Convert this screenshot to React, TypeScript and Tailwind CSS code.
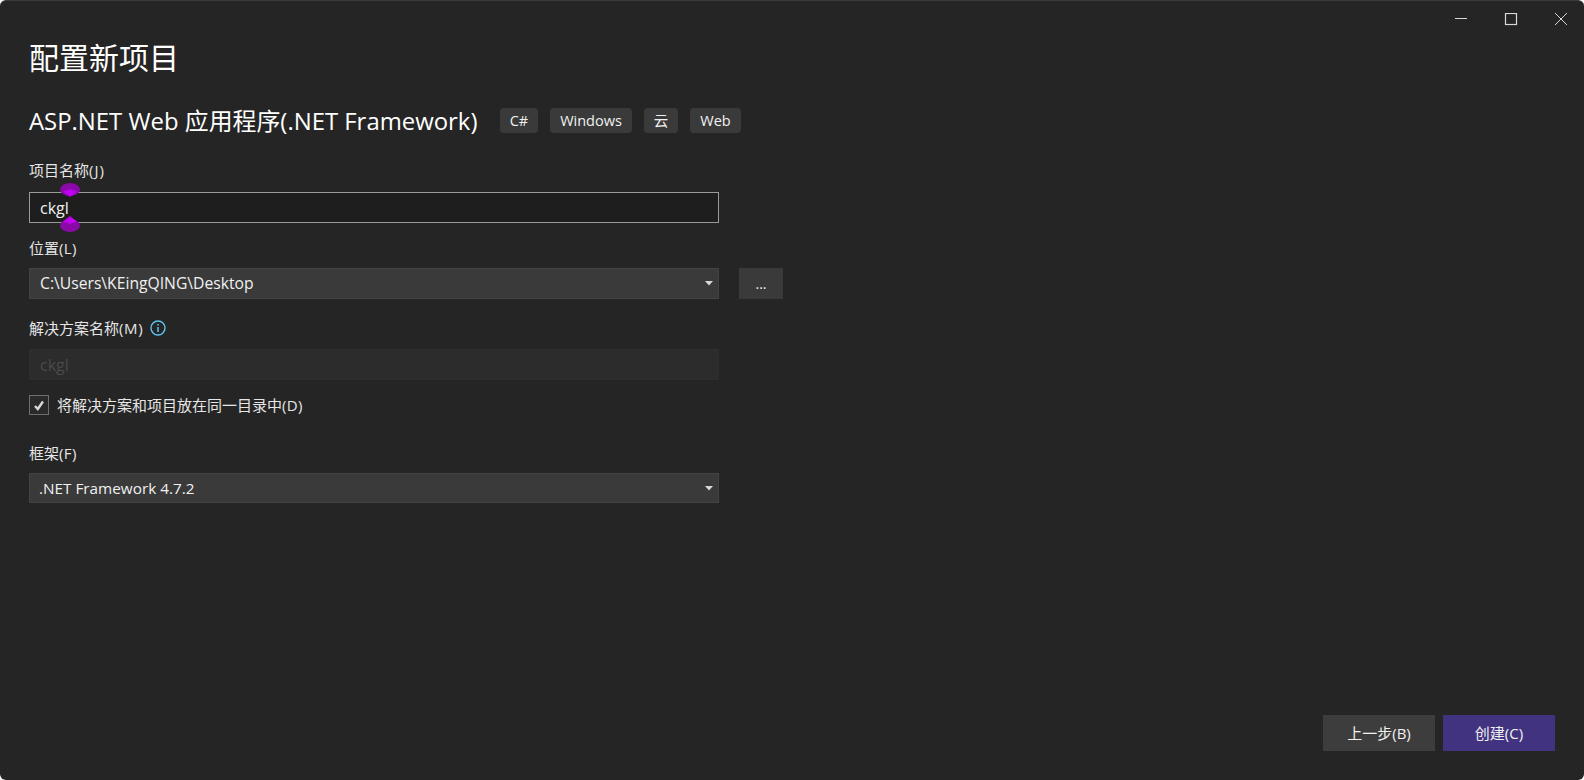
const font = { fontFamily: '"Open Sans", "Noto Sans CJK SC", sans-serif' };

function Caret() {
  return (
    <svg width="8" height="5" viewBox="0 0 8 5" className="shrink-0">
      <path d="M0 0h8L4 4.5z" fill="#d8d8d8" />
    </svg>
  );
}

function Tag({ label, className }: { label: string; className: string }) {
  return (
    <span className={`flex h-[25px] items-center justify-center rounded-[4px] bg-[#3a3a3a] text-[14.5px] text-[#f1f1f1] ${className}`}>
      {label}
    </span>
  );
}

function Select({ value, className }: { value: string; className: string }) {
  return (
    <div className={`flex w-[690px] items-center justify-between border border-[#434343] bg-[#3a3a3a] pr-[5px] text-[#f1f1f1] ${className}`}>
      <span>{value}</span>
      <Caret />
    </div>
  );
}

export default function App() {
  return (
    <div
      style={font}
      className="relative flex h-[780px] w-[1584px] flex-col overflow-hidden rounded-[6px] border-t border-[#3a3a3a] bg-[#252525] text-[#f1f1f1]"
    >
      {/* title bar buttons */}
      <div className="flex h-[25px] items-start justify-end pt-[12px]">
        <svg width="160" height="14" viewBox="0 0 160 14" className="text-[#d8d8d8]">
          <path d="M31 5.5h12" stroke="currentColor" fill="none" />
          <rect x="81.5" y="0.5" width="11" height="11" stroke="currentColor" strokeWidth="1.2" fill="none" />
          <path d="M131 0l12 12M143 0l-12 12" stroke="currentColor" fill="none" />
        </svg>
      </div>

      <div className="flex flex-1 flex-col pl-[29px]">
        <h1 className="mt-[14px] h-[36px] text-[30px] leading-[36px] font-normal text-white">配置新项目</h1>

        <div className="mt-[32px] flex h-[25px] items-center">
          <h2 className="w-[471px] text-[23.9px] leading-[25px] font-normal whitespace-nowrap text-white">
            ASP.NET Web 应用程序(.NET Framework)
          </h2>
          <div className="flex gap-[12px]">
            <Tag label="C#" className="w-[38px]" />
            <Tag label="Windows" className="w-[82px]" />
            <Tag label="云" className="w-[34px]" />
            <Tag label="Web" className="w-[51px]" />
          </div>
        </div>

        <label className="mt-[27px] h-[20px] text-[15px] leading-[20px] text-[#e6e6e6]">
          项目名称<span className="tracking-[1px]">(J)</span>
        </label>
        <div className="relative mt-[12px] flex h-[31px] w-[690px] items-center border border-[#9a9a9a] bg-[#1e1e1e] pl-[10px] text-[16px]">
          ckgl
          {/* selection handles */}
          <span className="absolute top-[-10px] left-[30px] h-[13px] w-[20px] rounded-[50%] bg-[#8a0aa8]" />
          <span className="absolute top-[-4px] left-[33px] h-[8px] w-[14px] bg-[#c000f0] [clip-path:polygon(50%_0,100%_30%,50%_100%,0_30%)]" />
          <span className="absolute bottom-[-10px] left-[30px] h-[13px] w-[20px] rounded-[50%] bg-[#8a0aa8]" />
          <span className="absolute bottom-[-2px] left-[33px] h-[8px] w-[14px] bg-[#c000f0] [clip-path:polygon(50%_0,100%_70%,50%_100%,0_70%)]" />
        </div>

        <label className="mt-[15px] h-[20px] text-[15px] leading-[20px] text-[#e6e6e6]">
          位置<span className="tracking-[0.4px]">(L)</span>
        </label>
        <div className="mt-[10px] flex items-center gap-[20px]">
          <Select value="C:\Users\KEingQING\Desktop" className="h-[31px] pl-[10px] text-[15.7px]" />
          <button className="flex h-[31px] w-[44px] items-center justify-center bg-[#3a3a3a] text-[14px] text-[#f1f1f1]">...</button>
        </div>

        <div className="mt-[19px] flex h-[20px] items-center gap-[7px] text-[15px] text-[#e6e6e6]">
          <span>
            解决方案名称<span className="tracking-[0.6px]">(M)</span>
          </span>
          <svg width="16" height="16" viewBox="0 0 16 16">
            <circle cx="8" cy="8" r="7" stroke="#5cc4f0" strokeWidth="1.4" fill="none" />
            <path d="M8 7v5M8 4v1.6" stroke="#5cc4f0" strokeWidth="1.5" fill="none" />
          </svg>
        </div>
        <div className="mt-[11px] flex h-[31px] w-[690px] items-center border border-[#2e2e2e] bg-[#2c2c2c] pl-[10px] text-[16px] text-[#4a4a4a]">ckgl</div>

        <div className="mt-[15px] flex h-[20px] items-center gap-[8px] text-[15px] text-[#e6e6e6]">
          <span className="flex h-[20px] w-[20px] items-center justify-center border border-[#6e6e6e] bg-[#2a2a2a]">
            <svg width="12" height="11" viewBox="0 0 12 11">
              <path d="M2 6l2.8 3L10 1.5" stroke="#d8d8d8" strokeWidth="2.4" fill="none" />
            </svg>
          </span>
          <span>
            将解决方案和项目放在同一目录中<span className="tracking-[0.4px]">(D)</span>
          </span>
        </div>

        <label className="mt-[28px] h-[20px] text-[15px] leading-[20px] text-[#e6e6e6]">
          框架<span className="tracking-[0.4px]">(F)</span>
        </label>
        <Select value=".NET Framework 4.7.2" className="mt-[10px] h-[30px] pl-[9px] text-[15.3px]" />

        <div className="mt-auto mb-[29px] flex justify-end gap-[8px] pr-[29px]">
          <button className="h-[36px] w-[112px] bg-[#3d3d3d] text-[15px] text-[#f1f1f1]">上一步(B)</button>
          <button className="h-[36px] w-[112px] bg-[#413380] text-[15px] text-[#f1f1f1]">创建(C)</button>
        </div>
      </div>
    </div>
  );
}
